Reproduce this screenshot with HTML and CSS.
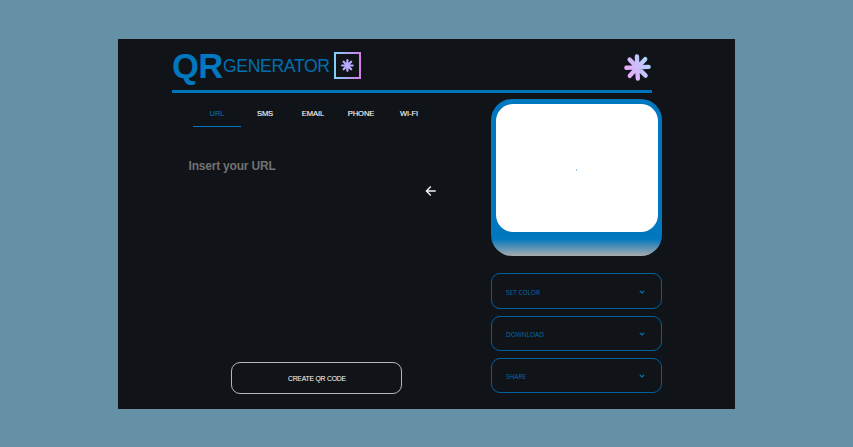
FILE: index.html
```
<!DOCTYPE html>
<html lang="en">
<head>
<meta charset="utf-8">
<title>QR Generator</title>
<link rel="stylesheet" href="styles.css">
</head>
<body>
<main class="app">
  <header class="header">
    <h1 class="logo"><span class="logo-qr">QR</span><span class="logo-text">GENERATOR</span></h1>
    <svg class="logo-icon" viewBox="0 0 27 27">
      <defs>
        <linearGradient id="frame" x1="0" x2="1" y1="0" y2="0"><stop offset="0" stop-color="#7fd0f8"/><stop offset="1" stop-color="#d67fe8"/></linearGradient>
        <linearGradient id="star" gradientUnits="userSpaceOnUse" x1="0" y1="20" x2="27" y2="8"><stop offset="0" stop-color="#f0a2f8"/><stop offset="1" stop-color="#abd8ff"/></linearGradient>
      </defs>
      <rect x="1" y="1" width="25" height="25" fill="none" stroke="url(#frame)" stroke-width="2"/>
      <path d="M13.4 8.2v10.6M8.1 13.5h10.6M9.6 9.7l7.6 7.6M17.2 9.7l-7.6 7.6" fill="none" stroke="#b9aaff" stroke-width="2.2" stroke-linecap="round"/>
    </svg>
    <svg class="star" viewBox="0 0 27 27">
      <path d="M12.9 2.4l.9 22.2M2.4 13.8l22.2-.9M5.6 5.6l16 16M21.2 5.2L5.8 21.8" fill="none" stroke="url(#star)" stroke-width="4.4" stroke-linecap="round"/>
    </svg>
  </header>
  <div class="content">
    <section class="editor">
      <nav class="tabs">
        <a class="tab active">URL</a><a class="tab">SMS</a><a class="tab">EMAIL</a><a class="tab">PHONE</a><a class="tab">WI-FI</a>
      </nav>
      <div class="prompt">Insert your URL</div>
      <svg class="back" viewBox="0 0 12 12"><path d="M10.7 6H1.6M5.8 1.6L1.4 6l4.4 4.4" fill="none" stroke="#f4f4f4" stroke-width="1.4"/></svg>
      <button class="create">CREATE QR CODE</button>
    </section>
    <aside class="side">
      <div class="preview"><div class="code"><i class="dot"></i></div></div>
      <div class="option">SET COLOR<svg class="chevron" viewBox="0 0 6 4"><path d="M.8 .8L3 3 5.2 .8"/></svg></div>
      <div class="option">DOWNLOAD<svg class="chevron" viewBox="0 0 6 4"><path d="M.8 .8L3 3 5.2 .8"/></svg></div>
      <div class="option">SHARE<svg class="chevron" viewBox="0 0 6 4"><path d="M.8 .8L3 3 5.2 .8"/></svg></div>
    </aside>
  </div>
</main>
</body>
</html>
```
FILE: styles.css
```
* { box-sizing: border-box; }
body {
  margin: 0;
  height: 447px;
  padding: 39px 118px 38px;
  background: #6591a7;
  font-family: "Liberation Sans", Arial, sans-serif;
  overflow: hidden;
}
.app {
  width: 617px;
  height: 370px;
  padding-left: 54px;
  background: #101418;
}
.header {
  display: flex;
  align-items: center;
  width: 480px;
  height: 54px;
  border-bottom: 3px solid #0073b9;
}
.logo {
  display: flex;
  align-items: center;
  margin: 3px 0 0;
  color: #0077be;
  font-weight: 400;
  line-height: 40px;
}
.logo-qr { font-size: 34.6px; font-weight: 700; width: 51px; letter-spacing: -.6px; }
.logo-text { font-size: 17.6px; width: 111px; color: #006fb2; letter-spacing: -.35px; }
.logo-icon { width: 27px; height: 27px; margin-top: 2px; }
.star { width: 27px; height: 27px; margin: 5px 1px 0 auto; }
.content { display: flex; }
.editor {
  display: flex;
  flex-direction: column;
  width: 319.4px;
  height: 316px;
}
.tabs { display: flex; margin: 7px 0 0 21px; }
.tab {
  width: 48px;
  height: 27px;
  line-height: 28px;
  text-align: center;
  font-size: 7.6px;
  letter-spacing: -.1px;
  color: #fff;
  -webkit-text-stroke: .1px #fff;
}
.tab.active {
  color: #0077be;
  border-bottom: 1px solid #0077be;
  -webkit-text-stroke: 0;
}
.prompt {
  margin: 31px 0 0 16.5px;
  color: #707173;
  font-size: 12px;
  letter-spacing: -.2px;
  font-weight: 700;
  line-height: 17px;
  height: 16px;
}
.back { width: 12px; height: 12px; margin: 11px 0 0 253px; }
.create {
  width: 171px;
  height: 32px;
  margin: auto 0 14.6px 59.4px;
  padding: 0;
  border: 1px solid #b4b7b9;
  border-radius: 9px;
  background: none;
  color: #fff;
  font: 6.8px "Liberation Sans", Arial, sans-serif;
  letter-spacing: -.2px;
}
.side { width: 170.6px; padding-top: 6px; }
.preview {
  height: 157.4px;
  margin-bottom: 17px;
  padding: 5px 4.2px 24px;
  border-radius: 21px;
  background: linear-gradient(#0077be 0 89%, #a9abad 100%);
}
.code {
  display: flex;
  align-items: center;
  justify-content: center;
  height: 128px;
  border-radius: 17px;
  background: #fff;
}
.dot { width: 1px; height: 2px; margin-top: 3px; background: #9ac6e2; }
.option {
  display: flex;
  align-items: center;
  justify-content: space-between;
  height: 35.6px;
  margin-bottom: 6.6px;
  padding: 2px 16px 0 13.6px;
  border: 1px solid #00609c;
  border-radius: 9px;
  color: #006cae;
  font: 6.5px "Open Sans", "Noto Sans", sans-serif;
}
.chevron { width: 6px; height: 4px; margin-top: -1px; fill: none; stroke: #0077be; stroke-width: 1.2; }
```
